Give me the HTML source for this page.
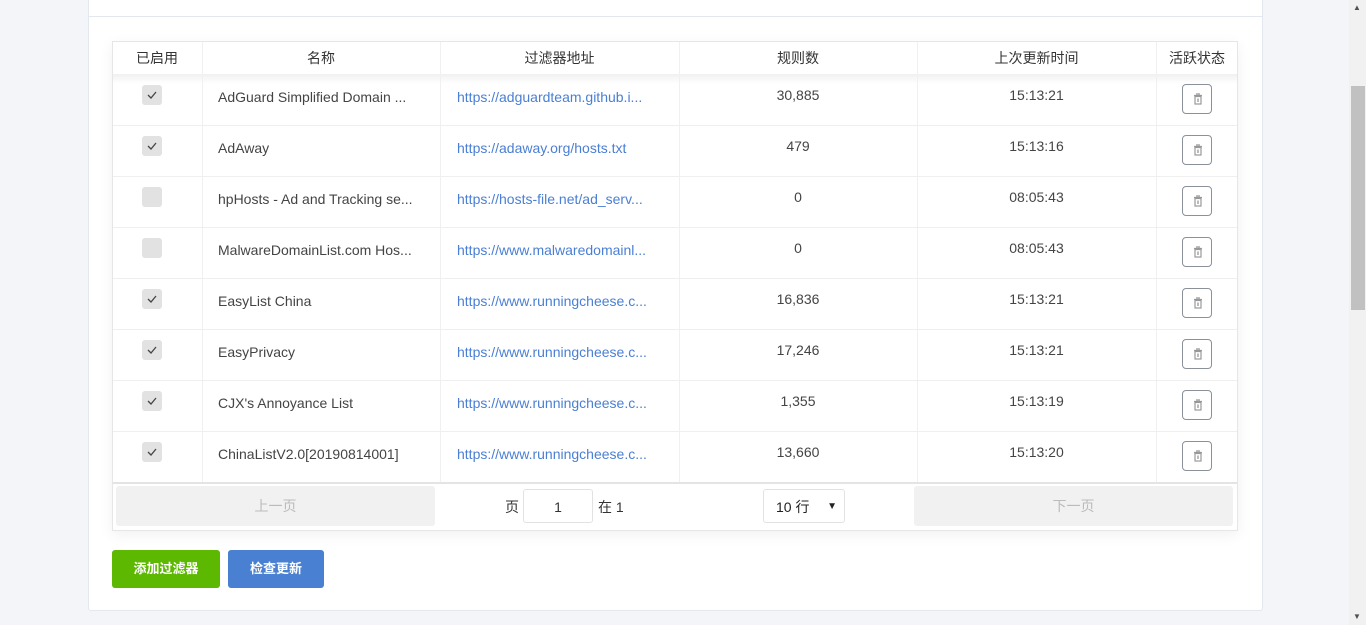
<!DOCTYPE html>
<html><head><meta charset="utf-8"><style>
*{margin:0;padding:0;box-sizing:border-box}
body{width:1366px;height:625px;overflow:hidden;background:#f3f5f9;font-family:"Liberation Sans","Noto Sans CJK SC",sans-serif;position:relative;color:#333}
.a{position:absolute}
.card{left:88px;top:-10px;width:1175px;height:621px;background:#fff;border:1px solid #e3e7ee;border-radius:3px}
.hl{left:89px;top:16px;width:1173px;height:1px;background:#e3e7ee}
.tbl{left:112px;top:41px;width:1126px;height:490px;border:1px solid #e6e6e6;background:#fff;box-shadow:0 4px 14px rgba(0,0,0,.06)}
.th{top:41px;height:33px;line-height:35px;text-align:center;font-size:14px;color:#333}
.vl{width:1px;background:#f0f0f0;top:42px;height:440px}
.hr{left:113px;width:1124px;height:1px;background:#efefef}
.c{font-size:14px;white-space:nowrap}
.cb{width:20px;height:20px;background:#e2e2e2;border-radius:3px;left:142px}
.cb svg{position:absolute;left:5px;top:5px}
.tr{left:1182px;width:30px;height:30px;border:1px solid #8a9199;border-radius:4px;background:#fff}
.tr svg{position:absolute;left:10px;top:8px}
.lnk{color:#4a7fd4;left:457px}
.btn{top:550px;height:38px;line-height:38px;color:#fff;font-weight:bold;font-size:13px;text-align:center;border-radius:3px}
</style></head><body>
<div class="a card"></div><div class="a hl"></div>
<div class="a tbl"></div>
<div class="a" style="left:113px;top:74px;width:1124px;height:10px;background:linear-gradient(rgba(0,0,0,.06),rgba(0,0,0,0))"></div>
<div class="a th" style="left:112px;width:90px">已启用</div>
<div class="a th" style="left:202px;width:238px">名称</div>
<div class="a th" style="left:440px;width:239px">过滤器地址</div>
<div class="a th" style="left:679px;width:238px">规则数</div>
<div class="a th" style="left:917px;width:239px">上次更新时间</div>
<div class="a th" style="left:1156px;width:82px">活跃状态</div>
<div class="a vl" style="left:202px"></div><div class="a vl" style="left:440px"></div><div class="a vl" style="left:679px"></div><div class="a vl" style="left:917px"></div><div class="a vl" style="left:1156px"></div>
<div class="a" style="left:113px;top:482px;width:1124px;height:2px;background:#e4e4e4"></div>
<div class="a" style="left:116px;top:486px;width:319px;height:40px;background:#f1f1f1;border-radius:3px;color:#bbb;font-size:14px;text-align:center;line-height:40px">上一页</div>
<div class="a" style="left:914px;top:486px;width:319px;height:40px;background:#f1f1f1;border-radius:3px;color:#bbb;font-size:14px;text-align:center;line-height:40px">下一页</div>
<div class="a c" style="left:505px;top:497px">页</div>
<div class="a" style="left:523px;top:489px;width:70px;height:34px;border:1px solid #e2e2e2;border-radius:3px;text-align:center;line-height:34px;font-size:14px">1</div>
<div class="a c" style="left:598px;top:497px">在 1</div>
<div class="a" style="left:763px;top:489px;width:82px;height:34px;border:1px solid #e2e2e2;border-radius:3px;font-size:14px;line-height:34px;padding-left:12px;color:#222">10 行<span style="position:absolute;right:7px;font-size:10px">▼</span></div>
<div class="a btn" style="left:112px;width:108px;background:#5cb800">添加过滤器</div>
<div class="a btn" style="left:228px;width:96px;background:#4a80d1">检查更新</div>
<div class="a" style="left:1349px;top:0;width:17px;height:625px;background:#f1f1f1"></div>
<div class="a" style="left:1351px;top:86px;width:14px;height:224px;background:#c1c1c1"></div>
<div class="a" style="left:1353px;top:3px;font-size:8px;color:#505050">▲</div>
<div class="a" style="left:1353px;top:612px;font-size:8px;color:#505050">▼</div>
<div id="rows"></div>
<script>
var d=[[1,"AdGuard Simplified Domain ...","https://adguardteam.github.i...","30,885","15:13:21"],
[1,"AdAway","https://adaway.org/hosts.txt","479","15:13:16"],
[0,"hpHosts - Ad and Tracking se...","https://hosts-file.net/ad_serv...","0","08:05:43"],
[0,"MalwareDomainList.com Hos...","https://www.malwaredomainl...","0","08:05:43"],
[1,"EasyList China","https://www.runningcheese.c...","16,836","15:13:21"],
[1,"EasyPrivacy","https://www.runningcheese.c...","17,246","15:13:21"],
[1,"CJX's Annoyance List","https://www.runningcheese.c...","1,355","15:13:19"],
[1,"ChinaListV2.0[20190814001]","https://www.runningcheese.c...","13,660","15:13:20"]];
var h="";
d.forEach(function(r,i){var y=74+i*51;
if(i>0)h+='<div class="a hr" style="top:'+y+'px"></div>';
h+='<div class="a cb" style="top:'+(y+11)+'px">'+(r[0]?'<svg width="10" height="10" viewBox="0 0 10 10"><path d="M1 5l3 3 5-6" fill="none" stroke="#444" stroke-width="1.3"/></svg>':'')+'</div>';
h+='<div class="a c" style="left:218px;top:'+(y+15)+'px;color:#444">'+r[1]+'</div>';
h+='<div class="a c lnk" style="top:'+(y+15)+'px">'+r[2]+'</div>';
h+='<div class="a c" style="left:679px;width:238px;text-align:center;top:'+(y+13)+'px;color:#444">'+r[3]+'</div>';
h+='<div class="a c" style="left:917px;width:239px;text-align:center;top:'+(y+13)+'px;color:#444">'+r[4]+'</div>';
h+='<div class="a tr" style="top:'+(y+10)+'px"><svg width="10" height="12" viewBox="0 0 10 12"><path d="M3 1h4M1 2.5h8" stroke="#999" stroke-width="1.2" fill="none"/><rect x="2" y="3.5" width="6" height="7.5" fill="none" stroke="#999" stroke-width="1.2"/><rect x="4" y="5.5" width="2" height="3.5" fill="#bbb"/></svg></div>';
});
document.getElementById("rows").innerHTML=h;
</script>
</body></html>
